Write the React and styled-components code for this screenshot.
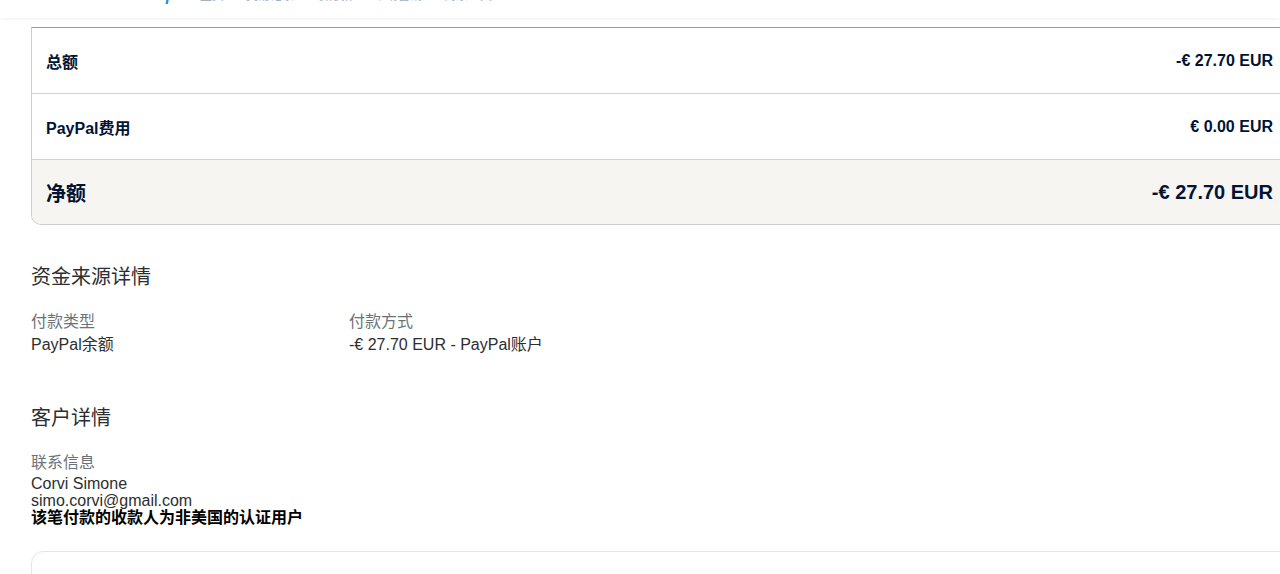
import React from "react";
import styled, { createGlobalStyle } from "styled-components";

const GlobalStyle = createGlobalStyle`
  html, body {
    margin: 0;
    padding: 0;
    background: #ffffff;
    overflow: hidden;
  }
  body {
    font-family: "Liberation Sans", Arial, "Noto Sans CJK SC", sans-serif;
    color: #2c2e2f;
  }
`;

const navItems = ["主页", "交易记录", "收付款", "市场营销", "商家工具"];

const amounts = [
  { label: "总额", value: "-€ 27.70 EUR" },
  { label: "PayPal费用", value: "€ 0.00 EUR" },
  { label: "净额", value: "-€ 27.70 EUR", total: true },
];

// Header (cut off at the top of the screenshot)
const Header = styled.header`
  height: 18px;
  background: #fff;
  box-shadow: 0 1px 3px rgba(0, 0, 0, 0.07);
  overflow: hidden;
  display: flex;
  align-items: flex-start;
  padding-left: 163px;
  gap: 22px;
`;

const Logo = styled.svg`
  margin-top: -9px;
  width: 10px;
  height: 14px;
`;

const NavItem = styled.span`
  margin-top: -11px;
  font-size: 12px;
  line-height: 14px;
  color: #9fb2c8;
  padding-left: ${(p) => p.$pad || 0}px;
`;

const Main = styled.main`
  padding: 9px 0 0 31px;
`;

const AmountTable = styled.div`
  width: 1258px;
  border: 1px solid #cccccc;
  border-top-color: #9b9b9b;
  border-radius: 0 0 10px 10px;
  overflow: hidden;
`;

const AmountRow = styled.div`
  height: ${(p) => (p.$total ? 64 : 65)}px;
  display: flex;
  align-items: center;
  justify-content: space-between;
  padding: 0 17px 0 14px;
  background: ${(p) => (p.$total ? "#f7f5f2" : "#fff")};
  border-bottom: ${(p) => (p.$total ? "none" : "1px solid #d2d2d2")};
  font-weight: bold;
  color: #001435;
  font-size: ${(p) => (p.$total ? 20 : 16)}px;
`;

const Section = styled.section`
  margin-top: ${(p) => p.$top}px;
`;

const SectionTitle = styled.h2`
  margin: 0;
  font-size: 20px;
  line-height: 28px;
  font-weight: normal;
  color: #2c2e2f;
`;

const FieldGrid = styled.div`
  display: grid;
  grid-template-columns: 318px 1fr;
  margin-top: 19px;
`;

const Field = styled.div`
  display: flex;
  flex-direction: column;
`;

const FieldLabel = styled.div`
  font-size: 16px;
  line-height: 24px;
  color: #6c7378;
`;

const FieldValue = styled.div`
  font-size: 16px;
  line-height: ${(p) => p.$lh || 22}px;
  color: ${(p) => (p.$bold ? "#000" : "#2c2e2f")};
  font-weight: ${(p) => (p.$bold ? "bold" : "normal")};
`;

const BottomCard = styled.div`
  margin-top: 25px;
  width: 1258px;
  height: 60px;
  border: 1px solid #e6e6e6;
  border-radius: 12px 12px 0 0;
`;

const App = () => (
  <>
    <GlobalStyle />
    <Header>
      <Logo viewBox="0 0 10 14">
        <path d="M2 0h5c2 0 3 1 2.6 3L8.4 9H5.6L5 13H2.6L4 5h3" fill="#2a8fe0" />
      </Logo>
      <NavItem $pad={5}>{navItems[0]}</NavItem>
      {navItems.slice(1).map((item) => (
        <NavItem key={item}>{item}</NavItem>
      ))}
    </Header>
    <Main>
      <AmountTable>
        {amounts.map((row) => (
          <AmountRow key={row.label} $total={row.total}>
            <span>{row.label}</span>
            <span>{row.value}</span>
          </AmountRow>
        ))}
      </AmountTable>

      <Section $top={38}>
        <SectionTitle>资金来源详情</SectionTitle>
        <FieldGrid>
          <Field>
            <FieldLabel>付款类型</FieldLabel>
            <FieldValue>PayPal余额</FieldValue>
          </Field>
          <Field>
            <FieldLabel>付款方式</FieldLabel>
            <FieldValue>-€ 27.70 EUR - PayPal账户</FieldValue>
          </Field>
        </FieldGrid>
      </Section>

      <Section $top={48}>
        <SectionTitle>客户详情</SectionTitle>
        <FieldGrid>
          <Field>
            <FieldLabel>联系信息</FieldLabel>
            <FieldValue $lh={17}>Corvi Simone</FieldValue>
            <FieldValue $lh={17}>simo.corvi@gmail.com</FieldValue>
            <FieldValue $lh={17} $bold>该笔付款的收款人为非美国的认证用户</FieldValue>
          </Field>
        </FieldGrid>
      </Section>

      <BottomCard />
    </Main>
  </>
);

export default App;
